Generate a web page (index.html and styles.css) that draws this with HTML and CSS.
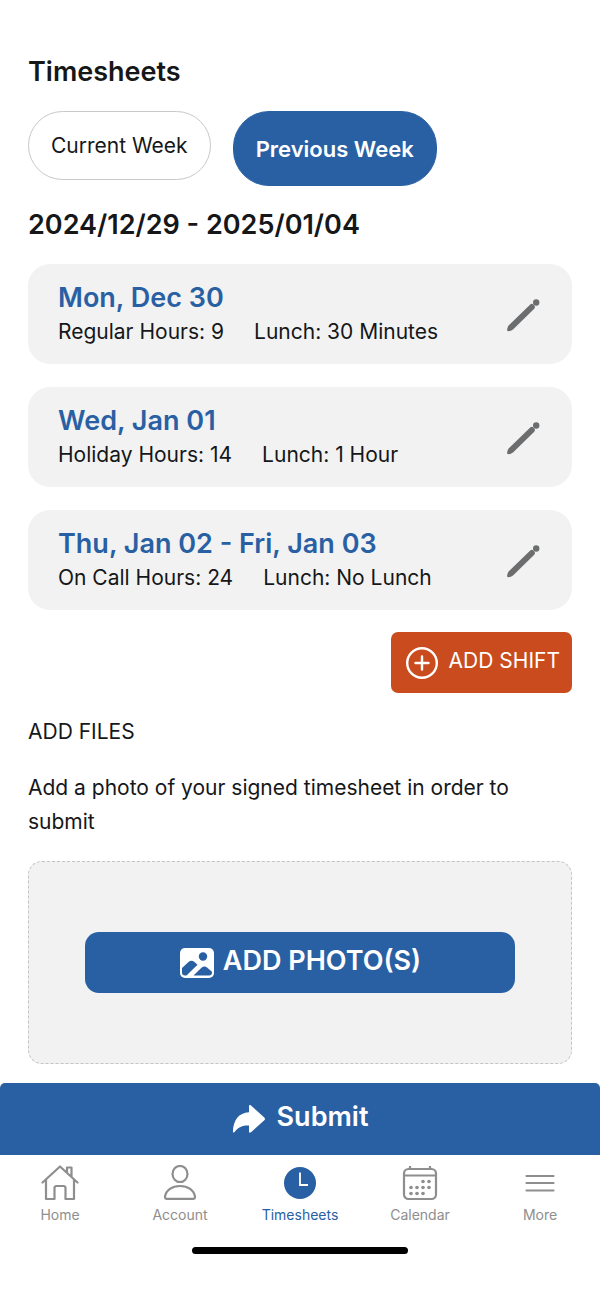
FILE: index.html
```html
<!DOCTYPE html>
<html lang="en">
<head>
  <meta charset="UTF-8" />
  <meta name="viewport" content="width=device-width, initial-scale=1.0"/>
  <title>Timesheets</title>
  <link rel="stylesheet" href="styles.css">
</head>
<body>
  <main class="content">
    <h1 class="heading">Timesheets</h1>

    <div class="weeks">
      <button type="button" class="pill">Current Week</button>
      <button type="button" class="pill pill-active">Previous Week</button>
    </div>

    <h2 class="heading">2024/12/29 - 2025/01/04</h2>

    <div class="shifts">
      <div class="shift">
        <div>
          <h3 class="shift-date">Mon, Dec 30</h3>
          <p class="shift-info"><span>Regular Hours: 9</span><span>Lunch: 30 Minutes</span></p>
        </div>
        <button type="button" class="btn-edit" aria-label="Edit Mon, Dec 30">
          <svg width="36" height="36" viewBox="0 0 36 36" fill="#6b6d6f"><path d="M2.600 28.400L24 7.700C25.200 6.500 26.300 6.500 27.300 7.500L28.300 8.500C29.300 9.600 29.200 10.700 28 11.900L7 32.400C6 33.200 4 34 2.600 34.200C1.500 34.300 1 33.700 1.100 32.800C1.300 31.300 1.800 29.400 2.600 28.400Z"/><circle cx="30.200" cy="5.500" r="3.200"/></svg>
        </button>
      </div>

      <div class="shift">
        <div>
          <h3 class="shift-date">Wed, Jan 01</h3>
          <p class="shift-info"><span>Holiday Hours: 14</span><span>Lunch: 1 Hour</span></p>
        </div>
        <button type="button" class="btn-edit" aria-label="Edit Wed, Jan 01">
          <svg width="36" height="36" viewBox="0 0 36 36" fill="#6b6d6f"><path d="M2.600 28.400L24 7.700C25.200 6.500 26.300 6.500 27.300 7.500L28.300 8.500C29.300 9.600 29.200 10.700 28 11.900L7 32.400C6 33.200 4 34 2.600 34.200C1.500 34.300 1 33.700 1.100 32.800C1.300 31.300 1.800 29.400 2.600 28.400Z"/><circle cx="30.200" cy="5.500" r="3.200"/></svg>
        </button>
      </div>

      <div class="shift">
        <div>
          <h3 class="shift-date">Thu, Jan 02 - Fri, Jan 03</h3>
          <p class="shift-info"><span>On Call Hours: 24</span><span>Lunch: No Lunch</span></p>
        </div>
        <button type="button" class="btn-edit" aria-label="Edit Thu, Jan 02 - Fri, Jan 03">
          <svg width="36" height="36" viewBox="0 0 36 36" fill="#6b6d6f"><path d="M2.600 28.400L24 7.700C25.200 6.500 26.300 6.500 27.300 7.500L28.300 8.500C29.300 9.600 29.200 10.700 28 11.900L7 32.400C6 33.200 4 34 2.600 34.200C1.500 34.300 1 33.700 1.100 32.800C1.300 31.300 1.800 29.400 2.600 28.400Z"/><circle cx="30.200" cy="5.500" r="3.200"/></svg>
        </button>
      </div>
    </div>

    <button type="button" class="btn-add">
      <svg width="34" height="34" viewBox="0 0 34 34" fill="none" stroke="#fff" stroke-width="2.400" stroke-linecap="round"><circle cx="17" cy="17" r="14.800"/><path d="M17 10.500V23.500M10.500 17H23.500"/></svg>
      <span class="btn-text">ADD SHIFT</span>
    </button>

    <h2 class="label">ADD FILES</h2>
    <p class="label">Add a photo of your signed timesheet in order to submit</p>

    <div class="dropzone">
      <button type="button" class="btn-photo">
        <svg width="36" height="32" viewBox="0 0 36 32"><rect x="1" y="1" width="34" height="30" rx="5" fill="#fff"/><g fill="#2960a4"><circle cx="24" cy="9.500" r="4.200"/><path d="M3 21L9.500 15C11.500 13.200 13.500 13.200 15.500 15L18.500 17.700L7.500 28.500H6C4 28.500 3 27.500 3 25.500Z"/><path d="M14.500 28.500L22.500 20.800C24.300 19.100 26.200 19 28 20.500L33 24.700V25.500C33 27.500 32 28.500 30 28.500Z"/></g></svg>
        <span class="btn-text">ADD PHOTO(S)</span>
      </button>
    </div>
  </main>

  <footer class="footer">
    <button type="button" class="btn-submit">
      <svg width="34" height="30" viewBox="0 0 34 30" fill="#fff"><path d="M17 2.200C17 .8 18 .6 19 1.400L32.300 13.600C33.200 14.500 33.200 15.300 32.300 16.200L19 28.200C18 29 17 28.800 17 27.500V21.500C10.500 21.300 6.500 23 3 27.600C2 29 .8 28.800 .9 27.300C1.500 16 6.500 8.800 17 8.200Z"/></svg>
      <span class="btn-text">Submit</span>
    </button>

    <nav class="tabs">
      <a href="#" class="tab">
        <svg width="38" height="36" viewBox="0 0 38 36" fill="none" stroke="#8e8e8e" stroke-width="2.200" stroke-linejoin="round" stroke-linecap="round"><path d="M1.500 17.500L19 1.500L36.500 17.500M5 14.500V34H13.500V23C13.500 21.800 14.300 21 15.500 21H22.500C23.700 21 24.500 21.800 24.500 23V34H33V14.500M26 7.500V2.500H30.500V11.500"/></svg>
        <span>Home</span>
      </a>
      <a href="#" class="tab">
        <svg width="38" height="36" viewBox="0 0 38 36" fill="none" stroke="#8e8e8e" stroke-width="2.200" stroke-linejoin="round"><ellipse cx="19" cy="9" rx="7.500" ry="8"/><path d="M6 33.800C4.500 33.800 3.800 33 4 31.700C5 25 11 21 19 21S33 25 34 31.700C34.200 33 33.500 33.800 32 33.800Z"/></svg>
        <span>Account</span>
      </a>
      <a href="#" class="tab tab-active">
        <svg width="38" height="36" viewBox="0 0 38 36" fill="none"><circle cx="19" cy="18" r="16" fill="#2960a4"/><path d="M19 7.500V20H27" stroke="#fff" stroke-width="1.800"/></svg>
        <span>Timesheets</span>
      </a>
      <a href="#" class="tab">
        <svg width="38" height="36" viewBox="0 0 38 36" fill="none" stroke="#8e8e8e" stroke-width="2.200"><rect x="3" y="4" width="32" height="30" rx="4.500"/><path d="M3 10.500H35M9 1V4M29 1V4"/><g fill="#8e8e8e" stroke="none"><circle cx="22" cy="16.500" r="1.800"/><circle cx="28" cy="16.500" r="1.800"/><circle cx="10" cy="22.500" r="1.800"/><circle cx="16" cy="22.500" r="1.800"/><circle cx="22" cy="22.500" r="1.800"/><circle cx="28" cy="22.500" r="1.800"/><circle cx="10" cy="28.500" r="1.800"/><circle cx="16" cy="28.500" r="1.800"/><circle cx="22" cy="28.500" r="1.800"/></g></svg>
        <span>Calendar</span>
      </a>
      <a href="#" class="tab">
        <svg width="38" height="36" viewBox="0 0 38 36" fill="none" stroke="#8e8e8e" stroke-width="2.200" stroke-linecap="round"><path d="M5.500 11H32.500M5.500 18H32.500M5.500 25.500H32.500"/></svg>
        <span>More</span>
      </a>
    </nav>
    <div class="home-indicator"></div>
  </footer>
</body>
</html>
```
FILE: styles.css
```css
* {
  box-sizing: border-box;
}

body {
  margin: 0;
  min-height: 100vh;
  display: flex;
  flex-direction: column;
  background-color: #ffffff;
  color: #151719;
  font-family: Inter, "Liberation Sans", sans-serif;
  font-size: 21px;
  line-height: 34px;
}

h1, h2, h3, p {
  margin: 0;
}

button {
  font: inherit;
  border: none;
  cursor: pointer;
}

svg {
  display: block;
  flex-shrink: 0;
}

.content {
  flex: 1;
  display: flex;
  flex-direction: column;
  gap: 22px;
  padding: 55px 28px 19px;
}

.heading {
  font-size: 27px;
  font-weight: 600;
}

.weeks {
  display: flex;
  align-items: flex-start;
  gap: 22px;
}

.pill {
  padding: 17px 22px 16px;
  border: 1px solid #c8c8c8;
  border-radius: 36px;
  background-color: #ffffff;
  color: #151719;
}

.pill-active {
  padding: 20px 22px 19px;
  border-color: #2960a4;
  background-color: #2960a4;
  color: #ffffff;
  font-size: 22px;
  font-weight: 600;
}

.shifts {
  display: flex;
  flex-direction: column;
  gap: 23px;
}

.shift {
  display: flex;
  justify-content: space-between;
  align-items: center;
  padding: 17px 30px 16px;
  border-radius: 22px;
  background-color: #f2f2f2;
}

.shift-date {
  color: #2960a4;
  font-size: 27px;
  font-weight: 600;
}

.shift-info {
  display: flex;
  flex-wrap: wrap;
  column-gap: 30px;
  line-height: 33px;
}

.btn-edit {
  padding: 0;
  background: none;
}

.btn-add {
  align-self: flex-end;
  display: flex;
  align-items: center;
  gap: 10px;
  height: 61px;
  padding: 0 12px 0 14px;
  border-radius: 7px;
  background-color: #ca4b1d;
  color: #ffffff;
}

/* lifts the caption a little above the icon's centre line */
.btn-text {
  padding-bottom: 4px;
}

.label {
  font-size: 21px;
  font-weight: 400;
}

.dropzone {
  padding: 70px 56px;
  border: 1px dashed #c4c4c4;
  border-radius: 14px;
  background-color: #f2f2f2;
}

.btn-photo {
  display: flex;
  justify-content: center;
  align-items: center;
  gap: 8px;
  width: 100%;
  height: 61px;
  border-radius: 14px;
  background-color: #2960a4;
  color: #ffffff;
  font-size: 27px;
  font-weight: 600;
}

.btn-submit {
  display: flex;
  justify-content: center;
  align-items: center;
  gap: 11px;
  width: 100%;
  height: 72px;
  border-radius: 5px 5px 0 0;
  background-color: #2960a4;
  color: #ffffff;
  font-size: 27px;
  font-weight: 600;
}

.tabs {
  display: grid;
  grid-template-columns: repeat(5, 1fr);
  padding-top: 10px;
}

.tab {
  display: flex;
  flex-direction: column;
  align-items: center;
  gap: 4px;
  color: #8e8e8e;
  font-size: 14px;
  line-height: 20px;
  text-decoration: none;
}

.tab-active {
  color: #2960a4;
}

.home-indicator {
  width: 36%;
  height: 7px;
  margin: 22px auto 46px;
  border-radius: 4px;
  background-color: #000000;
}
```
